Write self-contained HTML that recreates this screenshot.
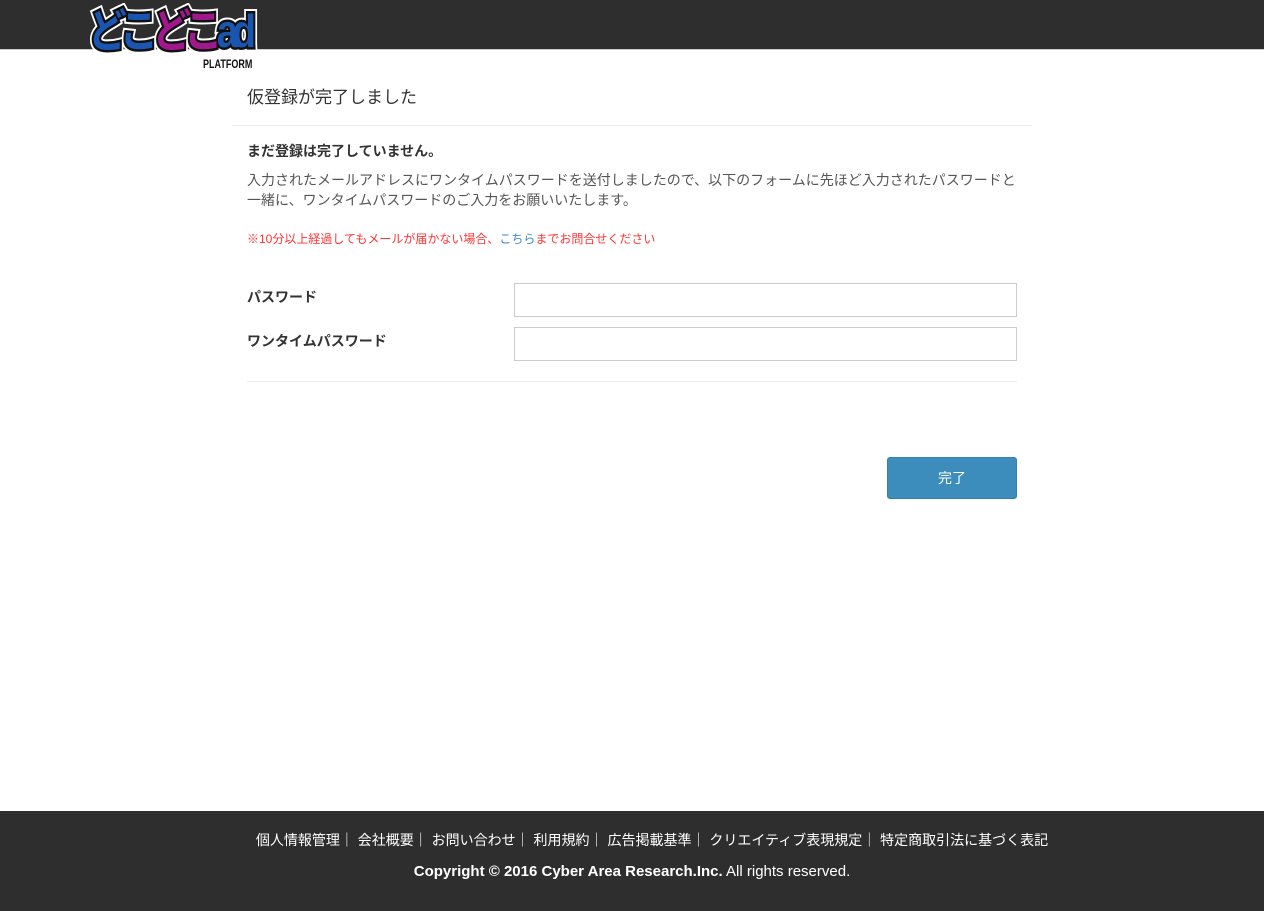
<!DOCTYPE html>
<html><head><meta charset="utf-8">
<style>
*{margin:0;padding:0;box-sizing:border-box}
body{width:1264px;height:911px;background:#fff;font-family:"Liberation Sans","Noto Sans CJK JP",sans-serif;color:#333;position:relative;overflow:hidden}
.hdr{position:absolute;left:0;top:0;width:1264px;height:50px;background:#2e2e2e;border-bottom:1px solid #ccc}
.logo{position:absolute;left:86px;top:2px;height:70px;width:170px}
.abs{position:absolute;white-space:nowrap}
.inp{position:absolute;left:514px;width:503px;height:34px;border:1px solid #ccc;background:#fff}
.ftr{position:absolute;left:0;top:811px;width:1264px;height:100px;background:#2e2e2e;color:#fff;text-align:center}
.lg{position:absolute;left:2px;top:4px;font:bold 46px/50px 'Liberation Sans','Noto Sans CJK JP',sans-serif;letter-spacing:-7px;white-space:nowrap;transform:scale(.84,1);transform-origin:left top}
</style></head><body>
<div class="hdr"></div>
<div class="logo">
<div class="abs" style="left:105px;top:46px;width:62px;height:24px;background:#fff"></div>
<div class="lg" style="-webkit-text-stroke:9px #fff;color:#fff">どこどこad</div>
<div class="lg" style="-webkit-text-stroke:5px #111;color:#111">どこどこad</div>
<div class="lg"><span style="color:#1a56b0">どこ</span><span style="color:#a0198c">どこ</span><span style="color:#1a56b0">ad</span></div>
<div class="abs" style="left:117px;top:56px;font:bold 12px/13px 'Liberation Sans',sans-serif;color:#111;transform:scaleX(.75);transform-origin:left">PLATFORM</div>
</div>
<div class="abs" style="left:247px;top:86px;font-size:17px;line-height:24px;color:#333">仮登録が完了しました</div>
<div class="abs" style="left:232px;top:125px;width:800px;height:1px;background:#eee"></div>
<div class="abs" style="left:247px;top:141px;font-size:14px;font-weight:bold;line-height:20px">まだ登録は完了していません。</div>
<div class="abs" style="left:247px;top:170px;font-size:14px;line-height:20px;color:#555">入力されたメールアドレスにワンタイムパスワードを送付しましたので、以下のフォームに先ほど入力されたパスワードと<br>一緒に、ワンタイムパスワードのご入力をお願いいたします。</div>
<div class="abs" style="left:247px;top:230px;font-size:12px;line-height:18px;color:#f33">※10分以上経過してもメールが届かない場合、<span style="color:#3a87c8">こちら</span>までお問合せください</div>
<div class="abs" style="left:247px;top:287px;font-size:14px;font-weight:bold;line-height:20px">パスワード</div>
<div class="abs" style="left:247px;top:331px;font-size:14px;font-weight:bold;line-height:20px">ワンタイムパスワード</div>
<div class="inp" style="top:283px"></div>
<div class="inp" style="top:327px"></div>
<div class="abs" style="left:247px;top:381px;width:770px;height:1px;background:#eee"></div>
<div class="abs" style="left:887px;top:457px;width:130px;height:42px;background:#3c8dbc;border:1px solid #367fa9;border-radius:3px;color:#fff;font-size:14px;line-height:40px;text-align:center">完了</div>
<div class="ftr">
<div style="margin-top:19px;padding-left:40px;font-size:14px;line-height:20px">個人情報管理｜ 会社概要｜ お問い合わせ｜ 利用規約｜ 広告掲載基準｜ クリエイティブ表現規定｜ 特定商取引法に基づく表記</div>
<div style="margin-top:12px;font-size:15px;line-height:20px"><b>Copyright © 2016 Cyber Area Research.Inc.</b> All rights reserved.</div>
</div>
</body></html>
